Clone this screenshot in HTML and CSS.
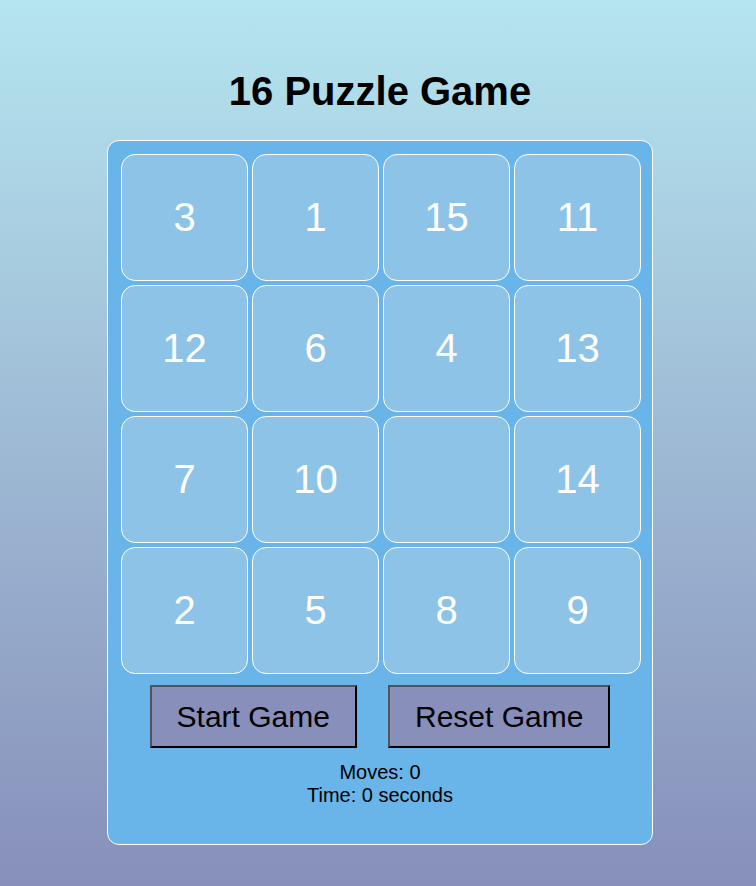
FILE: index.html
```html
<!DOCTYPE html>
<html lang="en">
<head>
<meta charset="utf-8">
<title>16 Puzzle Game</title>
<link rel="stylesheet" href="styles.css">
</head>
<body>
<main class="game">
<h1 class="title">16 Puzzle Game</h1>
<section class="panel">
<div class="board">
<button class="tile">3</button>
<button class="tile">1</button>
<button class="tile">15</button>
<button class="tile">11</button>
<button class="tile">12</button>
<button class="tile">6</button>
<button class="tile">4</button>
<button class="tile">13</button>
<button class="tile">7</button>
<button class="tile">10</button>
<div class="tile"></div>
<button class="tile">14</button>
<button class="tile">2</button>
<button class="tile">5</button>
<button class="tile">8</button>
<button class="tile">9</button>
</div>
<div class="controls">
<button class="action">Start Game</button>
<button class="action">Reset Game</button>
</div>
<div class="stats">
<div>Moves: 0</div>
<div>Time: 0 seconds</div>
</div>
</section>
</main>
</body>
</html>
```

FILE: styles.css
```css
* {
  box-sizing: border-box;
}

body {
  margin: 0;
  min-height: 100vh;
  padding: 68px 16px 41px 20px;
  background: linear-gradient(#b5e5ef, #878fba);
  font-family: "Liberation Sans", Arial, sans-serif;
  color: #000;
}

.game {
  max-width: 546px;
  margin: 0 auto;
}

.title {
  margin: 0 0 26px;
  font-size: 40px;
  line-height: 46px;
  text-align: center;
}

.panel {
  padding: 13px 11px 37px;
  border: 1px solid #fff;
  border-radius: 12px;
  background: #69b4e8;
}

.board {
  display: grid;
  grid-template-columns: repeat(4, 1fr);
  gap: 4px;
  padding-left: 2px;
}

.tile {
  aspect-ratio: 1;
  padding: 0;
  border: 1px solid #fff;
  border-radius: 14px;
  background: #8ec3e8;
  color: #fff;
  font: inherit;
  font-size: 40px;
}

.controls {
  display: flex;
  justify-content: center;
  gap: 31px;
  margin-top: 11px;
}

.action {
  padding: 12px 25px;
  border: 2px outset #000;
  border-radius: 0;
  background: #878fba;
  color: #000;
  font: inherit;
  font-size: 30px;
  line-height: 35px;
}

.stats {
  margin-top: 13px;
  font-size: 20px;
  line-height: 23px;
  text-align: center;
}
```
